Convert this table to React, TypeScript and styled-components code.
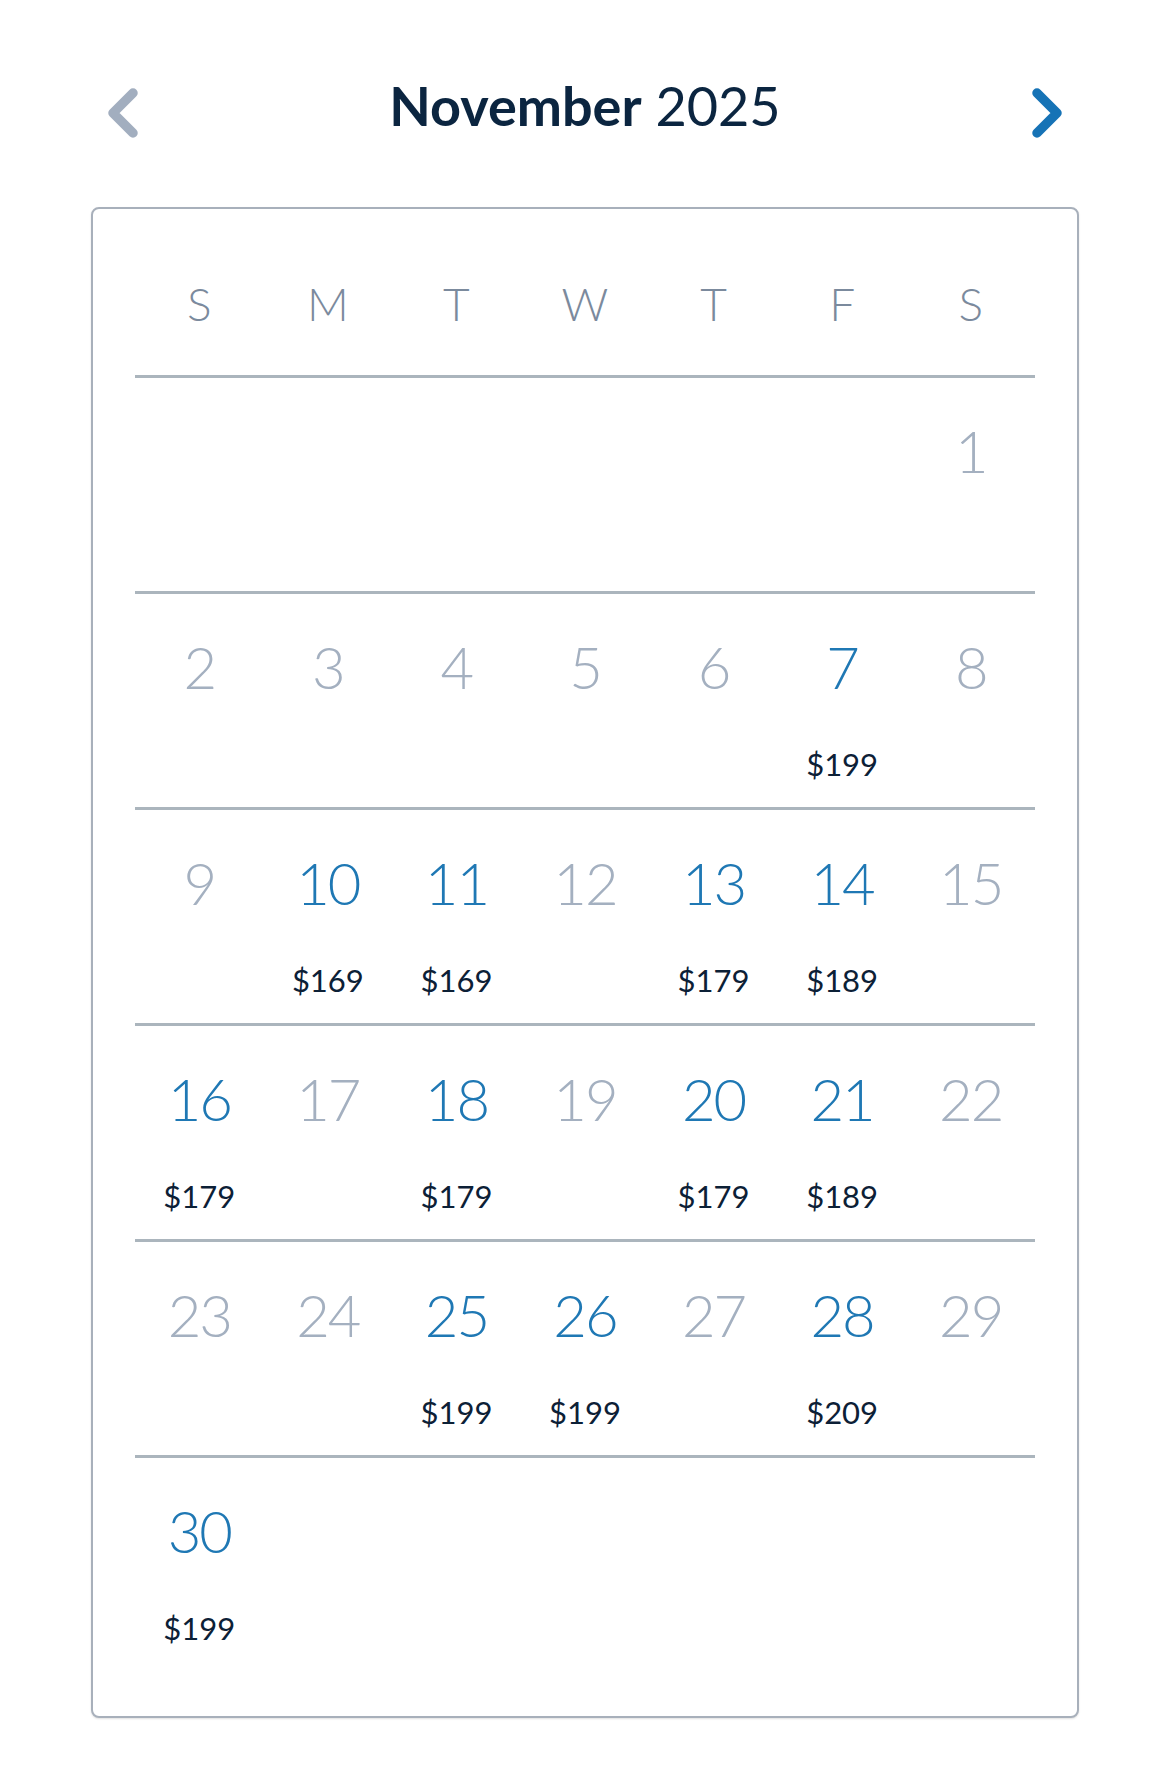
import React from "react";
import styled, { createGlobalStyle } from "styled-components";

type Day = { day: number; price?: number } | null;

const prices: Record<number, number> = {
  7: 199,
  10: 169,
  11: 169,
  13: 179,
  14: 189,
  16: 179,
  18: 179,
  20: 179,
  21: 189,
  25: 199,
  26: 199,
  28: 209,
  30: 199,
};

const weekdays = ["S", "M", "T", "W", "T", "F", "S"];

const buildWeeks = (): Day[][] => {
  const cells: Day[] = Array(6).fill(null);
  for (let d = 1; d <= 30; d++) {
    cells.push(prices[d] ? { day: d, price: prices[d] } : { day: d });
  }
  const weeks: Day[][] = [];
  for (let i = 0; i < cells.length; i += 7) {
    weeks.push(cells.slice(i, i + 7));
  }
  return weeks;
};

const Chevron = ({ dir, color }: { dir: "left" | "right"; color: string }) => (
  <svg width="34" height="52" viewBox="0 0 34 52">
    <path
      d={dir === "left" ? "M27 6 L7 26 L27 46" : "M7 6 L27 26 L7 46"}
      fill="none"
      stroke={color}
      strokeWidth="9.5"
      strokeLinecap="round"
      strokeLinejoin="round"
    />
  </svg>
);

const App = () => {
  const weeks = buildWeeks();
  return (
    <>
      <GlobalStyle />
      <Page>
        <Header>
          <NavButton aria-label="previous month">
            <Chevron dir="left" color="#a2aebf" />
          </NavButton>
          <Title>
            <strong>November</strong> 2025
          </Title>
          <NavButton aria-label="next month">
            <Chevron dir="right" color="#1673b6" />
          </NavButton>
        </Header>

        <Card>
          <Weekdays>
            {weekdays.map((w, i) => (
              <Weekday key={i}>{w}</Weekday>
            ))}
          </Weekdays>
          {weeks.map((week, wi) => (
            <Week key={wi}>
              {week.map((cell, ci) => (
                <Cell key={ci}>
                  {cell && (
                    <>
                      <DayNum $available={!!cell.price}>{cell.day}</DayNum>
                      {cell.price && <Price>${cell.price}</Price>}
                    </>
                  )}
                </Cell>
              ))}
            </Week>
          ))}
        </Card>
      </Page>
    </>
  );
};

const GlobalStyle = createGlobalStyle`
  body {
    margin: 0;
    background: #fff;
    font-family: Lato, "Open Sans", sans-serif;
  }
`;

const Page = styled.div`
  width: 1170px;
  padding-top: 87px;
  padding-bottom: 60px;
`;

const Header = styled.div`
  display: flex;
  align-items: center;
  justify-content: space-between;
  height: 52px;
  padding: 0 106px;
`;

const NavButton = styled.button`
  display: flex;
  padding: 0;
  border: 0;
  background: none;
  cursor: pointer;
`;

const Title = styled.h1`
  margin: 0 0 14px;
  font-size: 54px;
  font-weight: 400;
  line-height: 52px;
  color: #0b2540;

  strong {
    font-weight: 700;
  }
`;

const Card = styled.div`
  margin: 68px 91px 0;
  padding: 0 42px 45px;
  border: 2px solid #a8b0bb;
  border-radius: 8px;
  box-shadow: 0 1px 2px rgba(0, 0, 0, 0.12);
  background: #fff;
`;

const Weekdays = styled.div`
  display: grid;
  grid-template-columns: repeat(7, 1fr);
  height: 166px;
  padding-top: 67px;
  box-sizing: border-box;
`;

const Weekday = styled.div`
  text-align: center;
  font-size: 46px;
  font-weight: 300;
  line-height: 56px;
  color: #7b8a9d;
`;

const Week = styled.div`
  display: grid;
  grid-template-columns: repeat(7, 1fr);
  height: 216px;
  box-sizing: border-box;
  border-top: 3px solid #abb5bd;
`;

const Cell = styled.div`
  display: flex;
  flex-direction: column;
  align-items: center;
  padding-top: 43px;
`;

const DayNum = styled.span<{ $available: boolean }>`
  font-size: 58px;
  font-weight: 300;
  line-height: 60px;
  letter-spacing: -2px;
  color: ${(p) => (p.$available ? "#1f78b4" : "#a4b0c0")};
`;

const Price = styled.span`
  margin-top: 52px;
  font-size: 31px;
  line-height: 31px;
  color: #0c2036;
`;

export default App;
